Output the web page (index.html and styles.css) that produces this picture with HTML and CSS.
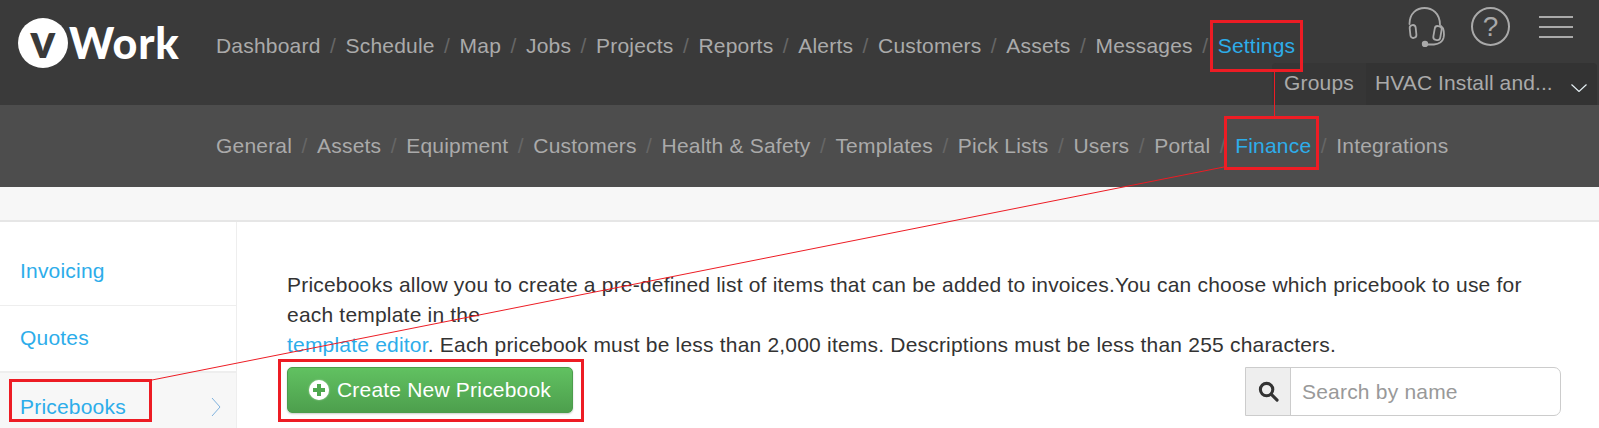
FILE: index.html
```html
<!DOCTYPE html>
<html lang="en">
<head>
<meta charset="utf-8">
<title>vWork Pricebooks</title>
<link rel="stylesheet" href="styles.css">
</head>
<body>
<div class="page">
  <header class="topbar">
    <a class="logo"><span class="logo-mark">v</span><span class="logo-word">Work</span></a>
    <nav class="crumbs">
      <a>Dashboard</a><i>/</i><a>Schedule</a><i>/</i><a>Map</a><i>/</i><a>Jobs</a><i>/</i><a>Projects</a><i>/</i><a>Reports</a><i>/</i><a>Alerts</a><i>/</i><a>Customers</a><i>/</i><a>Assets</a><i>/</i><a>Messages</a><i>/</i><a class="active">Settings</a>
    </nav>
    <div class="tools">
      <svg class="tool-headset" viewBox="0 0 38 40" width="38" height="40" fill="none" stroke="#a9a9a9" stroke-width="1.8" stroke-linecap="round">
        <path d="M1.500 17C1.500 6 9 1 16.500 1S32 6 32 18"/>
        <rect x="2" y="18" width="6" height="13" rx="3" transform="rotate(-6 5 24)"/>
        <rect x="26" y="19" width="7" height="14" rx="3" transform="rotate(10 29 26)"/>
        <path d="M33 19c3 2 3.500 8 2.500 12-1 3.500-5 6-9.500 6.500H18"/>
        <circle cx="17" cy="37" r="2.300" fill="#a9a9a9"/>
      </svg>
      <span class="tool-help">?</span>
      <span class="tool-menu"><b></b><b></b><b></b></span>
    </div>
    <div class="groups">
      <span class="groups-label">Groups</span>
      <span class="groups-value">HVAC Install and...
        <svg class="groups-caret" viewBox="0 0 16 8" width="16" height="8" fill="none" stroke="#e4eef2" stroke-width="1.2"><path d="M0.500 0.500 8 7.500 15.500 0.500"/></svg>
      </span>
    </div>
  </header>
  <nav class="subbar">
    <a>General</a><i>/</i><a>Assets</a><i>/</i><a>Equipment</a><i>/</i><a>Customers</a><i>/</i><a>Health &amp; Safety</a><i>/</i><a>Templates</a><i>/</i><a>Pick Lists</a><i>/</i><a>Users</a><i>/</i><a>Portal</a><i>/</i><a class="active">Finance</a><i>/</i><a>Integrations</a>
  </nav>
  <div class="band"></div>
  <div class="body">
    <aside class="side">
      <a class="side-item">Invoicing</a>
      <a class="side-item">Quotes</a>
      <a class="side-item current">Pricebooks
        <svg viewBox="0 0 10 20" width="10" height="20" fill="none" stroke="#7fb2de" stroke-width="1"><path d="M1 1 9 10 1 19"/></svg>
      </a>
    </aside>
    <main class="content">
      <p class="intro">Pricebooks allow you to create a pre-defined list of items that can be added to invoices.You can choose which pricebook to use for each template in the<br><a>template editor</a>. Each pricebook must be less than 2,000 items. Descriptions must be less than 255 characters.</p>
      <div class="actions">
        <button class="create"><span class="plus"></span>Create New Pricebook</button>
        <div class="search">
          <span class="search-icon">
            <svg viewBox="0 0 22 22" width="21" height="21" fill="none" stroke="#333" stroke-width="3.200"><circle cx="9" cy="9" r="6.500"/><path d="M14 14l6 6" stroke-linecap="round"/></svg>
          </span>
          <span class="search-input">Search by name</span>
        </div>
      </div>
    </main>
  </div>
  <svg class="notes" viewBox="0 0 1599 428" width="1599" height="428" fill="none" stroke="#ed1c24">
    <path d="M1274.500 72V116M1224 167 152 380" stroke-width="1"/>
    <g stroke-width="3">
      <rect x="1211.500" y="21.500" width="90" height="49"/>
      <rect x="1225.500" y="117.500" width="92" height="51"/>
      <rect x="10.500" y="380.500" width="140" height="40"/>
      <rect x="279.500" y="360.500" width="303" height="60"/>
    </g>
  </svg>
</div>
</body>
</html>
```

FILE: styles.css
```css
* { box-sizing: border-box; }
html, body { margin: 0; height: 100%; overflow: hidden; background: #fff; }
body { font-family: "Liberation Sans", Arial, sans-serif; font-size: 21px; letter-spacing: 0.2px; color: #333; }
.page { position: relative; width: 1599px; height: 428px; overflow: hidden; }

.topbar { position: relative; height: 105px; background: #3a3a3a; display: flex; align-items: flex-start; }
.logo { display: flex; align-items: center; margin: 18px 0 0 18px; width: 198px; height: 50px; color: #fff; }
.logo-mark {
  width: 50px; height: 50px; border-radius: 50%; background: #fff; color: #3a3a3a;
  font: 900 48px/43px Lato, sans-serif; text-align: center; flex: none;
}
.logo-word { font: 900 43px/52px Lato, sans-serif; letter-spacing: 0.8px; margin-left: 1px; }
.crumbs { display: flex; padding-top: 34px; line-height: 23px; color: #aaa; }
.crumbs i, .subbar i { font-style: normal; color: #666; padding: 0 9.45px; }
.active { color: #2dadea; }

.tools { position: absolute; top: 7px; left: 1408px; display: flex; }
.tool-headset { flex: none; }
.tool-help {
  width: 39px; height: 39px; margin: 0 0 0 25px; border: 2px solid #a9a9a9; border-radius: 50%;
  color: #a9a9a9; font-size: 28px; line-height: 35px; text-align: center; letter-spacing: 0;
}
.tool-menu { display: flex; flex-direction: column; gap: 8px; width: 34px; margin: 9px 0 0 29px; }
.tool-menu b { display: block; height: 2px; background: #a9a9a9; }

.groups { position: absolute; left: 1272px; top: 63px; width: 325px; height: 42px; display: flex; border-radius: 4px 4px 0 0; color: #aaa; line-height: 40px; overflow: hidden; }
.groups-label { width: 94px; padding-left: 12px; background: #363636; }
.groups-value { position: relative; flex: 1; padding-left: 9px; background: #333; letter-spacing: 0.1px; }
.groups-caret { position: absolute; right: 10px; top: 21px; }

.subbar { height: 82px; background: #4d4d4d; display: flex; padding: 29px 0 0 216px; line-height: 23px; color: #aaa; }

.band { height: 33px; background: #f7f7f7; }
.body { display: flex; height: 208px; border-top: 2px solid #e6e6e6; }
.side { width: 237px; flex: none; padding-top: 17px; border-right: 1px solid #eee; }
.side-item { display: flex; align-items: center; height: 67px; padding: 0 0 2px 20px; color: #2dadea; border-bottom: 1px solid #eee; }
.side-item + .side-item { height: 66px; }
.side-item svg { margin-left: auto; margin-right: 15px; }
.side-item.current { height: 68px; padding-bottom: 0; background: #f7f7f7; border-top: 1px solid #eee; border-bottom: 0; }

.content { flex: 1; padding: 48px 38px 0 50px; }
.intro { margin: 0; line-height: 30px; color: #333; }
.intro a { color: #2dadea; }
.actions { display: flex; justify-content: space-between; align-items: flex-start; margin-top: 7px; }
.create {
  width: 286px; height: 46px; display: flex; align-items: center; justify-content: center; gap: 8px;
  padding: 0; border: 1px solid #4c9d4c; border-radius: 5px; color: #fff; font: 21px "Liberation Sans", Arial, sans-serif; letter-spacing: 0.2px;
  background: linear-gradient(#61c161, #4d9f4d); box-shadow: 0 1px 2px rgba(0,0,0,.2);
}
.plus {
  position: relative; width: 20px; height: 20px; border-radius: 50%; background: #fff; flex: none; box-shadow: 0 0 2px rgba(255,255,255,.6);
}
.plus::before, .plus::after { content: ""; position: absolute; background: #4fa84f; }
.plus::before { left: 8px; top: 4px; width: 4px; height: 12px; }
.plus::after { left: 4px; top: 8px; width: 12px; height: 4px; }
.search { display: flex; width: 316px; height: 49px; border: 1px solid #ccc; border-radius: 0 7px 7px 0; }
.search-icon { width: 45px; display: flex; align-items: center; justify-content: center; background: #eee; border-right: 1px solid #ccc; flex: none; }
.search-input { padding-left: 11px; line-height: 47px; color: #999; }

.notes { position: absolute; left: 0; top: 0; pointer-events: none; }
```
